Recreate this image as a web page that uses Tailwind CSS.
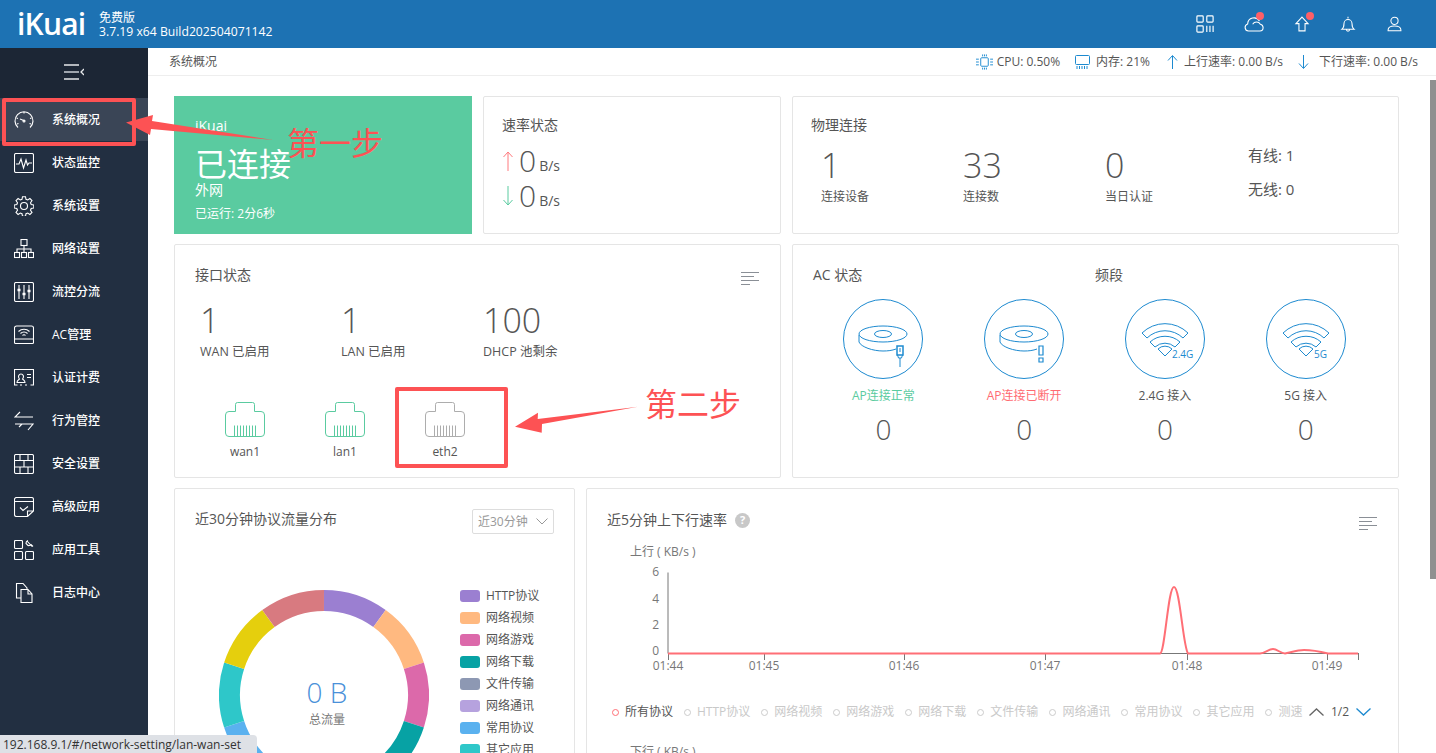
<!DOCTYPE html>
<html lang="zh-CN">
  <head>
    <title>iKuai</title>
    <meta charset="utf-8" />
    <script src="https://cdn.jsdelivr.net/npm/@tailwindcss/browser@4"></script>
  </head>
  <body class="relative h-[753px] w-[1436px] overflow-hidden bg-white font-['Open_Sans','Noto_Sans_CJK_SC',sans-serif] text-[#555]">
    <!-- top bar -->
    <header class="flex h-12 items-center bg-[#1d72b3] text-white">
      <div class="w-[99px] pl-[17px] text-[30px] leading-none font-semibold tracking-[-0.8px]">iKuai</div>
      <div class="pt-[2px] text-xs leading-[14px]">
        <div>免费版</div>
        <div class="text-[12.2px]">3.7.19 x64 Build202504071142</div>
      </div>
      <div class="ml-auto flex items-center gap-[30px] pr-[33px]">
        <svg class="h-[18px] w-[18px]" viewBox="0 0 20 20" fill="none" stroke="#fff" stroke-width="1.3"><rect x="1" y="1" width="7" height="7" rx="1"/><rect x="12" y="1" width="7" height="7" rx="1"/><rect x="1" y="12" width="7" height="7" rx="1"/><path d="M12 12v7M15.500 12v7M19 12v7"/></svg>
        <div class="relative">
          <svg class="block h-4 w-5" viewBox="0 2 22 17.600" fill="none" stroke="#fff" stroke-width="1.200"><path d="M5 18.500a4 4 0 0 1-1-7.800A7 7 0 0 1 17 7.500M9.500 11a5 5 0 0 1 8.500 0a3.800 3.800 0 0 1 3 3.600 3.800 3.800 0 0 1-3.500 3.900H5"/></svg>
          <span class="absolute top-[-4px] right-0 h-2 w-2 rounded-full bg-[#ff5f67]"></span>
        </div>
        <div class="relative">
          <svg class="block h-4 w-4" viewBox="0 0 18 21" fill="none" stroke="#fff" stroke-width="1.400"><path d="M9 1.500 17 10h-4v9.500H5V10H1z"/></svg>
          <span class="absolute top-[-4px] right-[-4px] h-2 w-2 rounded-full bg-[#ff5f67]"></span>
        </div>
        <svg class="h-4 w-4" viewBox="0 0 17 20" fill="none" stroke="#fff" stroke-width="1.300"><path d="M8.500 1v2M1 16.500c2-1.500 2.500-4 2.500-7a5 5 0 0 1 10 0c0 3 .5 5.500 2.500 7zM6.500 17a2 2 0 0 0 4 0"/></svg>
        <svg class="h-4 w-[17px]" viewBox="0 0 18 20" fill="none" stroke="#fff" stroke-width="1.300"><circle cx="9" cy="6" r="4.500"/><path d="M1 18.500v-1c0-3 3-5 8-5s8 2 8 5v1z"/></svg>
      </div>
    </header>

    <div class="flex h-[705px]">
      <!-- side menu -->
      <aside class="w-[148px] shrink-0 bg-[#222f41] text-xs font-medium text-white">
        <div class="flex h-[50px] items-center justify-center bg-[#1c2635]">
          <svg class="mt-[-2px] h-4 w-5" viewBox="0 0 20 16" fill="none" stroke="#e5e7ea" stroke-width="1.300"><path d="M0 1h15M0 15h15M20 5l-3 3 3 3"/><path d="M0 8h15" stroke="#9ea4ad" stroke-width="2"/></svg>
        </div>
        <nav>
          <a class="flex h-[43px] items-center gap-[18px] bg-[#3a4556] pl-[14px]">
            <svg class="h-5 w-5" viewBox="0 0 20 20" fill="none" stroke="#fff" stroke-width="1.100"><path d="M4 17.500A9 9 0 1 1 16 17.500M6 9l5 2M10 2v1.500M2.500 8l1.500.5M17.500 8l-1.500.5M3 14l1.500-.5M17 14l-1.500-.5"/><circle cx="10" cy="11" r="1"/></svg>
            <span>系统概况</span>
          </a>
          <a class="flex h-[43px] items-center gap-[18px] pl-[14px]">
            <svg class="h-5 w-5" viewBox="0 0 20 20" fill="none" stroke="#fff" stroke-width="1.100"><rect x=".5" y=".5" width="19" height="19" rx="1.500"/><path d="M2 11h3l2-5 2.500 9L12 7l1.500 5 1.500-2h3"/></svg>
            <span>状态监控</span>
          </a>
          <a class="flex h-[43px] items-center gap-[18px] pl-[14px]">
            <svg class="h-5 w-5" viewBox="0 0 20 20" fill="none" stroke="#fff" stroke-width="1.100"><circle cx="10" cy="10" r="3.500"/><path d="M8.500 .7h3l.5 2.600 1.700.7 2.200-1.500 2.100 2.100-1.500 2.200.7 1.700 2.600.5v3l-2.600.5-.7 1.700 1.500 2.200-2.100 2.100-2.200-1.500-1.700.7-.5 2.600h-3l-.5-2.600-1.700-.7-2.200 1.500-2.100-2.100 1.500-2.200-.7-1.700-2.600-.5v-3l2.600-.5.7-1.700-1.500-2.200 2.100-2.100 2.200 1.500 1.700-.7z"/></svg>
            <span>系统设置</span>
          </a>
          <a class="flex h-[43px] items-center gap-[18px] pl-[14px]">
            <svg class="h-5 w-5" viewBox="0 0 20 20" fill="none" stroke="#fff" stroke-width="1.100"><rect x="7" y=".5" width="6" height="6"/><rect x=".5" y="13.500" width="5" height="5"/><rect x="7.500" y="13.500" width="5" height="5"/><rect x="14.500" y="13.500" width="5" height="5"/><path d="M10 6.500v7M3 13.500V10h14v3.500"/></svg>
            <span>网络设置</span>
          </a>
          <a class="flex h-[43px] items-center gap-[18px] pl-[14px]">
            <svg class="h-5 w-5" viewBox="0 0 20 20" fill="none" stroke="#fff" stroke-width="1.100"><rect x=".5" y=".5" width="19" height="19" rx="1.500"/><path d="M5 3v14M10 3v14M15 3v14" /><path d="M3.500 8h3M8.500 12h3M13.500 9h3" stroke-width="2.500"/></svg>
            <span>流控分流</span>
          </a>
          <a class="flex h-[43px] items-center gap-[18px] pl-[14px]">
            <svg class="h-5 w-5" viewBox="0 0 20 20" fill="none" stroke="#fff" stroke-width="1.100"><path d="M.5 14V3a2 2 0 0 1 2-2h15a2 2 0 0 1 2 2v11zM.5 14v3.500a1 1 0 0 0 1 1h17a1 1 0 0 0 1-1V14"/><path d="M4.500 6.500a8 8 0 0 1 11 0M6.500 8.500a5 5 0 0 1 7 0M8.500 10.500a2 2 0 0 1 3 0"/></svg>
            <span>AC管理</span>
          </a>
          <a class="flex h-[43px] items-center gap-[18px] pl-[14px]">
            <svg class="h-5 w-5" viewBox="0 0 20 20" fill="none" stroke="#fff" stroke-width="1.100"><path d="M3.500 17H.5V1.500h19V17h-3M6 17h2M11 17h2M3 14.500c0-2.500 1.500-2.500 2.500-3.500-2-2.500-.5-5 1.500-5s3.500 2.500 1.500 5c1 1 2.500 1 2.500 3.500zM13 6.500h4M13 9.500h4"/></svg>
            <span>认证计费</span>
          </a>
          <a class="flex h-[43px] items-center gap-[18px] pl-[14px]">
            <svg class="h-5 w-5" viewBox="0 0 20 20" fill="none" stroke="#fff" stroke-width="1.100"><path d="M19 6H1l5-5M1 13h18l-5 6M8 13l-3 3"/></svg>
            <span>行为管控</span>
          </a>
          <a class="flex h-[43px] items-center gap-[18px] pl-[14px]">
            <svg class="h-5 w-5" viewBox="0 0 20 20" fill="none" stroke="#fff" stroke-width="1.100"><rect x=".5" y=".5" width="19" height="19" rx="1.500"/><path d="M.5 6.500h19M.5 13h19M6 .5v6M14 .5v6M10 6.500V13M6 13v6.500M14 13v6.500"/></svg>
            <span>安全设置</span>
          </a>
          <a class="flex h-[43px] items-center gap-[18px] pl-[14px]">
            <svg class="h-5 w-5" viewBox="0 0 20 20" fill="none" stroke="#fff" stroke-width="1.100"><path d="M13.500 19.500h-11a2 2 0 0 1-2-2V2.500a2 2 0 0 1 2-2h15a2 2 0 0 1 2 2v11.500zM.5 4.500h19M19.500 14h-6v5.500M6 10.500l3 3 5-4"/></svg>
            <span>高级应用</span>
          </a>
          <a class="flex h-[43px] items-center gap-[18px] pl-[14px]">
            <svg class="h-5 w-5" viewBox="0 0 20 20" fill="none" stroke="#fff" stroke-width="1.100"><rect x=".5" y=".5" width="8" height="8" rx="1"/><rect x=".5" y="11.500" width="8" height="8" rx="1"/><rect x="11.500" y="11.500" width="8" height="8" rx="1"/><path d="M13 1l5 5.500M14 .5a3 3 0 0 0-2 3l2 2a3 3 0 0 0 3-1l2 2" /></svg>
            <span>应用工具</span>
          </a>
          <a class="flex h-[43px] items-center gap-[18px] pl-[14px]">
            <svg class="h-5 w-5" viewBox="0 0 20 20" fill="none" stroke="#fff" stroke-width="1.100"><path d="M6.500 15H2.500V.5H9l4 4.500V7M7 6.500h7l4 4.500v8.500H7zM14 6.500V11h4"/></svg>
            <span>日志中心</span>
          </a>
        </nav>
      </aside>

      <main class="flex min-w-0 flex-1 flex-col">
        <!-- breadcrumb and live figures -->
        <div class="flex h-[28px] shrink-0 items-center border-b border-[#eee] pr-[18px] pl-[21px] text-xs">
          <span>系统概况</span>
          <div class="ml-auto flex items-center">
            <svg class="mr-[4px] h-4 w-[17px]" viewBox="0 0 18 16" fill="none" stroke="#1d8ad0" stroke-width="1"><rect x="5" y="3.500" width="8" height="9" rx="1"/><path d="M0 5h3M0 8h3M0 11h3M15 5h3M15 8h3M15 11h3M7 0v2M9 0v2M11 0v2M7 14v2M9 14v2M11 14v2"/></svg>
            <span>CPU: 0.50%</span>
            <svg class="mr-[6px] ml-[15px] h-[14px] w-[15px]" viewBox="0 0 15 14" fill="none" stroke="#1d8ad0" stroke-width="1"><rect x=".5" y=".5" width="14" height="9" rx="1"/><path d="M2 11v3M4.500 11v3M7 11v3M9.500 11v3M12 11v3"/></svg>
            <span>内存: 21%</span>
            <svg class="mr-[6px] ml-[17px] h-[14px] w-[11px]" viewBox="0 0 11 14" fill="none" stroke="#1d8ad0" stroke-width="1"><path d="M5.500 14V1M1 5.500l4.500-5 4.500 5"/></svg>
            <span>上行速率: 0.00 B/s</span>
            <svg class="mr-[10px] ml-[15px] h-[14px] w-[11px]" viewBox="0 0 11 14" fill="none" stroke="#1d8ad0" stroke-width="1"><path d="M5.500 0v13M1 8.500l4.500 5 4.500-5"/></svg>
            <span>下行速率: 0.00 B/s</span>
          </div>
        </div>

        <div class="flex min-h-0 flex-1">
          <div class="flex w-[1275px] shrink-0 flex-col gap-[10px] pt-5 pl-[26px] pr-[24px]">
            <!-- row 1 -->
            <div class="flex h-[138px] shrink-0 gap-[11px]">
              <section class="w-[298px] bg-[#5acba0] pt-[22px] pl-[21px] text-white">
                <div class="text-sm leading-4">iKuai</div>
                <div class="mt-[11px] text-[32px] leading-[38px]">已连接</div>
                <div class="mt-[-3px] text-sm leading-5">外网</div>
                <div class="mt-[5px] text-xs leading-[18px]">已运行: 2分6秒</div>
              </section>
              <section class="w-[298px] rounded-[2px] border border-[#e5e5e5] pt-[18px] pl-[18px]">
                <h2 class="text-sm leading-5">速率状态</h2>
                <div class="mt-[8px] flex h-[35px] items-center">
                  <svg class="mr-[5px] h-5 w-3" viewBox="0 0 12 20" fill="none" stroke="#ff7b7f" stroke-width="1"><path d="M6 20V1M1.500 6 6 1l4.500 5"/></svg>
                  <span class="text-[30px] leading-none font-light">0</span>
                  <span class="mt-[10px] ml-[3px] text-sm leading-4">B/s</span>
                </div>
                <div class="flex h-[35px] items-center">
                  <svg class="mr-[5px] h-5 w-3" viewBox="0 0 12 20" fill="none" stroke="#5acba0" stroke-width="1"><path d="M6 0v19M1.500 14 6 19l4.500-5"/></svg>
                  <span class="text-[30px] leading-none font-light">0</span>
                  <span class="mt-[10px] ml-[3px] text-sm leading-4">B/s</span>
                </div>
              </section>
              <section class="relative w-[607px] rounded-[2px] border border-[#e5e5e5] pt-[18px] pl-[18px]">
                <h2 class="text-sm leading-5">物理连接</h2>
                <div class="mt-[10px] flex pl-[10px]">
                  <div class="w-[142px]"><div class="text-[34px] leading-[40px] font-light">1</div><div class="mt-[2px] text-xs leading-5">连接设备</div></div>
                  <div class="w-[142px]"><div class="text-[34px] leading-[40px] font-light">33</div><div class="mt-[2px] text-xs leading-5">连接数</div></div>
                  <div class="w-[143px]"><div class="text-[34px] leading-[40px] font-light">0</div><div class="mt-[2px] text-xs leading-5">当日认证</div></div>
                  <div class="text-[15px]">
                    <div class="leading-5">有线: 1</div>
                    <div class="mt-[14px] leading-5">无线: 0</div>
                  </div>
                </div>
              </section>
            </div>

            <!-- row 2 -->
            <div class="flex h-[234px] shrink-0 gap-[11px]">
              <section class="w-[607px] rounded-[2px] border border-[#e5e5e5] pt-[19px] pr-[21px] pl-5">
                <div class="flex items-center justify-between">
                  <h2 class="text-sm leading-5">接口状态</h2>
                  <svg class="mt-2 h-[14px] w-[18px]" viewBox="0 0 18 14" stroke="#8a8f96" stroke-width="1"><path d="M0 .5h18M0 4.500h13M0 8.500h18M0 12.500h9"/></svg>
                </div>
                <div class="mt-[12px] flex pl-[5px]">
                  <div class="w-[141px]"><div class="text-[34px] leading-[44px] font-light">1</div><div class="text-[12.5px] leading-5">WAN 已启用</div></div>
                  <div class="w-[142px]"><div class="text-[34px] leading-[44px] font-light">1</div><div class="text-[12.5px] leading-5">LAN 已启用</div></div>
                  <div><div class="text-[34px] leading-[44px] font-light">100</div><div class="text-[12.5px] leading-5">DHCP 池剩余</div></div>
                </div>
                <div class="mt-[40px] flex text-xs">
                  <div class="flex w-[100px] flex-col items-center gap-[7px]">
                    <svg class="h-[35px] w-10" viewBox="0 0 40 35" fill="none" stroke="#5acba0" stroke-width="1"><path d="M10.500 9.500v-7a2 2 0 0 1 2-2h15a2 2 0 0 1 2 2v7H36a3.500 3.500 0 0 1 3.500 3.500v18a3.500 3.500 0 0 1-3.500 3.500H4A3.500 3.500 0 0 1 .500 31V13A3.500 3.500 0 0 1 4 9.500zM9.500 23.500v11M12.500 23.500v11M15.500 23.500v11M18.500 23.500v11M21.500 23.500v11M24.500 23.500v11M27.500 23.500v11M30.500 23.500v11"/></svg>
                    <span>wan1</span>
                  </div>
                  <div class="flex w-[100px] flex-col items-center gap-[7px]">
                    <svg class="h-[35px] w-10" viewBox="0 0 40 35" fill="none" stroke="#5acba0" stroke-width="1"><path d="M10.500 9.500v-7a2 2 0 0 1 2-2h15a2 2 0 0 1 2 2v7H36a3.500 3.500 0 0 1 3.500 3.500v18a3.500 3.500 0 0 1-3.500 3.500H4A3.500 3.500 0 0 1 .500 31V13A3.500 3.500 0 0 1 4 9.500zM9.500 23.500v11M12.500 23.500v11M15.500 23.500v11M18.500 23.500v11M21.500 23.500v11M24.500 23.500v11M27.500 23.500v11M30.500 23.500v11"/></svg>
                    <span>lan1</span>
                  </div>
                  <div class="flex w-[100px] flex-col items-center gap-[7px]">
                    <svg class="h-[35px] w-10" viewBox="0 0 40 35" fill="none" stroke="#adadad" stroke-width="1"><path d="M10.500 9.500v-7a2 2 0 0 1 2-2h15a2 2 0 0 1 2 2v7H36a3.500 3.500 0 0 1 3.500 3.500v18a3.500 3.500 0 0 1-3.500 3.500H4A3.500 3.500 0 0 1 .500 31V13A3.500 3.500 0 0 1 4 9.500zM9.500 23.500v11M12.500 23.500v11M15.500 23.500v11M18.500 23.500v11M21.500 23.500v11M24.500 23.500v11M27.500 23.500v11M30.500 23.500v11"/></svg>
                    <span>eth2</span>
                  </div>
                </div>
              </section>
              <section class="w-[607px] rounded-[2px] border border-[#e5e5e5] pt-5">
                <div class="flex pl-5 text-sm leading-5">
                  <h2 class="w-[282px]">AC 状态</h2>
                  <h2>频段</h2>
                </div>
                <div class="mt-[14px] grid grid-cols-4 pr-[22px] pl-[20px] text-center text-xs">
                  <div class="flex flex-col items-center">
                    <svg class="h-20 w-20" viewBox="0 0 80 80" fill="none" stroke="#1d8ad0" stroke-width="1"><circle cx="40" cy="40" r="39.500"/><ellipse cx="40" cy="35" rx="24" ry="8"/><ellipse cx="40" cy="35" rx="8.500" ry="3.500"/><path d="M16 36v7c2 5 14 9 24 9 5 0 9-.5 13-2"/><rect x="54" y="47" width="6" height="9" fill="#fff" stroke-width="1.500"/><path d="M57 49v4M54.500 56l1 3h3l1-3M57 59v9"/></svg>
                    <div class="mt-[10px] leading-[13px] text-[#5acba0]">AP连接正常</div>
                    <div class="mt-[10px] text-[28px] leading-[34px] font-light">0</div>
                  </div>
                  <div class="flex flex-col items-center">
                    <svg class="h-20 w-20" viewBox="0 0 80 80" fill="none" stroke="#1d8ad0" stroke-width="1"><circle cx="40" cy="40" r="39.500"/><ellipse cx="40" cy="35" rx="24" ry="8"/><ellipse cx="40" cy="35" rx="8.500" ry="3.500"/><path d="M16 36v7c2 5 14 9 24 9 5 0 9-.5 13-2"/><path d="M55 47h4v9h-4zM55 59h4v4h-4z" stroke-width="1.200"/></svg>
                    <div class="mt-[10px] leading-[13px] text-[#ff6b72]">AP连接已断开</div>
                    <div class="mt-[10px] text-[28px] leading-[34px] font-light">0</div>
                  </div>
                  <div class="flex flex-col items-center">
                    <svg class="h-20 w-20" viewBox="0 0 80 80" fill="none" stroke="#1d8ad0" stroke-width="1"><circle cx="40" cy="40" r="39.500"/><path d="M17 34a33 33 0 0 1 46 0l-5 5a26 26 0 0 0-36 0zM25 43a22.500 22.500 0 0 1 30 0l-5 5a15 15 0 0 0-20 0zM33 50a10 10 0 0 1 14 0l-7 7z"/><text x="47" y="59" font-size="10" fill="#1d8ad0" stroke="none">2.4G</text></svg>
                    <div class="mt-[10px] leading-[13px]">2.4G 接入</div>
                    <div class="mt-[10px] text-[28px] leading-[34px] font-light">0</div>
                  </div>
                  <div class="flex flex-col items-center">
                    <svg class="h-20 w-20" viewBox="0 0 80 80" fill="none" stroke="#1d8ad0" stroke-width="1"><circle cx="40" cy="40" r="39.500"/><path d="M17 34a33 33 0 0 1 46 0l-5 5a26 26 0 0 0-36 0zM25 43a22.500 22.500 0 0 1 30 0l-5 5a15 15 0 0 0-20 0zM33 50a10 10 0 0 1 14 0l-7 7z"/><text x="48" y="59" font-size="10" fill="#1d8ad0" stroke="none">5G</text></svg>
                    <div class="mt-[10px] leading-[13px]">5G 接入</div>
                    <div class="mt-[10px] text-[28px] leading-[34px] font-light">0</div>
                  </div>
                </div>
              </section>
            </div>

            <!-- row 3 -->
            <div class="flex h-[400px] shrink-0 gap-[11px]">
              <section class="relative w-[401px] rounded-[2px] border border-[#e5e5e5] pt-[20px] pr-5 pl-5">
                <div class="flex justify-between">
                  <h2 class="text-sm leading-5">近30分钟协议流量分布</h2>
                  <div class="flex h-[25px] w-[82px] items-center justify-between rounded-[2px] border border-[#ddd] px-[5px] text-xs text-[#999]">
                    近30分钟
                    <svg class="h-[7px] w-3" viewBox="0 0 12 7" fill="none" stroke="#999" stroke-width="1"><path d="M.5.500 6 6l5.500-5.500"/></svg>
                  </div>
                </div>
                <div class="mt-[44px] flex">
                  <div class="relative mt-[12px] ml-[24px] h-[210px] w-[210px] shrink-0">
                    <svg class="h-[210px] w-[210px]" viewBox="0 0 210 210" fill="none" stroke-width="21">
                      <circle cx="105" cy="105" r="94.500" pathLength="360" stroke-dasharray="36 324" stroke="#9b7fd1" transform="rotate(-90 105 105)"/>
                      <circle cx="105" cy="105" r="94.500" pathLength="360" stroke-dasharray="36 324" stroke="#ffb980" transform="rotate(-54 105 105)"/>
                      <circle cx="105" cy="105" r="94.500" pathLength="360" stroke-dasharray="36 324" stroke="#dc69aa" transform="rotate(-18 105 105)"/>
                      <circle cx="105" cy="105" r="94.500" pathLength="360" stroke-dasharray="36 324" stroke="#07a2a4" transform="rotate(18 105 105)"/>
                      <circle cx="105" cy="105" r="94.500" pathLength="360" stroke-dasharray="36 324" stroke="#8d98b3" transform="rotate(54 105 105)"/>
                      <circle cx="105" cy="105" r="94.500" pathLength="360" stroke-dasharray="36 324" stroke="#b6a2de" transform="rotate(90 105 105)"/>
                      <circle cx="105" cy="105" r="94.500" pathLength="360" stroke-dasharray="36 324" stroke="#5ab1ef" transform="rotate(126 105 105)"/>
                      <circle cx="105" cy="105" r="94.500" pathLength="360" stroke-dasharray="36 324" stroke="#2ec7c9" transform="rotate(162 105 105)"/>
                      <circle cx="105" cy="105" r="94.500" pathLength="360" stroke-dasharray="36 324" stroke="#e5cf0d" transform="rotate(198 105 105)"/>
                      <circle cx="105" cy="105" r="94.500" pathLength="360" stroke-dasharray="36 324" stroke="#d87a80" transform="rotate(234 105 105)"/>
                    </svg>
                    <div class="absolute inset-x-0 top-[86px] pl-[6px] text-center">
                      <div class="text-[28px] leading-[32px] font-light text-[#4a90d9]">0 B</div>
                      <div class="mt-[3px] text-xs leading-[18px] text-[#777]">总流量</div>
                    </div>
                  </div>
                  <ul class="mt-[8px] ml-[31px] flex flex-col gap-[2px] text-xs">
                    <li class="flex h-5 items-center gap-[6px]"><i class="h-3 w-5 rounded-[3px] bg-[#9b7fd1]"></i>HTTP协议</li>
                    <li class="flex h-5 items-center gap-[6px]"><i class="h-3 w-5 rounded-[3px] bg-[#ffb980]"></i>网络视频</li>
                    <li class="flex h-5 items-center gap-[6px]"><i class="h-3 w-5 rounded-[3px] bg-[#dc69aa]"></i>网络游戏</li>
                    <li class="flex h-5 items-center gap-[6px]"><i class="h-3 w-5 rounded-[3px] bg-[#07a2a4]"></i>网络下载</li>
                    <li class="flex h-5 items-center gap-[6px]"><i class="h-3 w-5 rounded-[3px] bg-[#8d98b3]"></i>文件传输</li>
                    <li class="flex h-5 items-center gap-[6px]"><i class="h-3 w-5 rounded-[3px] bg-[#b6a2de]"></i>网络通讯</li>
                    <li class="flex h-5 items-center gap-[6px]"><i class="h-3 w-5 rounded-[3px] bg-[#5ab1ef]"></i>常用协议</li>
                    <li class="flex h-5 items-center gap-[6px]"><i class="h-3 w-5 rounded-[3px] bg-[#2ec7c9]"></i>其它应用</li>
                  </ul>
                </div>
              </section>
              <section class="w-[813px] rounded-[2px] border border-[#e5e5e5] pt-[20px] pr-[21px] pl-5">
                <div class="flex items-center">
                  <h2 class="text-sm leading-5">近5分钟上下行速率</h2>
                  <span class="ml-2 flex h-[15px] w-[15px] items-center justify-center rounded-full bg-[#c8c8c8] text-[11px] font-bold text-white">?</span>
                  <svg class="mt-2 ml-auto h-[14px] w-[18px]" viewBox="0 0 18 14" stroke="#8a8f96" stroke-width="1"><path d="M0 .5h18M0 4.500h13M0 8.500h18M0 12.500h9"/></svg>
                </div>
                <svg class="mt-[1px] ml-[-20px] block h-[145px] w-[790px] text-xs" viewBox="0 0 790 145" fill="none">
                  <text x="43" y="24" font-size="12" fill="#777">上行 ( KB/s )</text>
                  <g font-size="12" fill="#777" text-anchor="end">
                    <text x="72" y="44">6</text><text x="72" y="71">4</text><text x="72" y="97">2</text><text x="72" y="123">0</text>
                  </g>
                  <path d="M81 40.500v81h691M81.500 121v7M177.500 121v7M317.500 121v7M458.500 121v7M600.500 121v7M740.500 121v7M771.500 121v7" stroke="#777" stroke-width="1"/>
                  <g font-size="12" fill="#777" text-anchor="middle">
                    <text x="81" y="138">01:44</text><text x="177" y="138">01:45</text><text x="317" y="138">01:46</text><text x="458" y="138">01:47</text><text x="600" y="138">01:48</text><text x="740" y="138">01:49</text>
                  </g>
                  <path d="M81 121.500H573C578 121 581 55 587 55S596 115 601 121.500H673C678 121 682 117 686 117S694 121.500 698 121.500C702 121 710 118 717 118S735 120 741 121.500H771" stroke="#ff6f76" stroke-width="2"/>
                </svg>
                <div class="mt-[27px] flex items-center pl-[5px] text-xs text-[#c9c9c9]">
                  <span class="flex items-center gap-[6px] text-[#555]"><i class="h-[7px] w-[7px] rounded-full border border-[#ff6f76]"></i>所有协议</span>
                  <span class="ml-[11px] flex items-center gap-[6px]"><i class="h-[7px] w-[7px] rounded-full border border-[#ccc]"></i>HTTP协议</span>
                  <span class="ml-[11px] flex items-center gap-[6px]"><i class="h-[7px] w-[7px] rounded-full border border-[#ccc]"></i>网络视频</span>
                  <span class="ml-[11px] flex items-center gap-[6px]"><i class="h-[7px] w-[7px] rounded-full border border-[#ccc]"></i>网络游戏</span>
                  <span class="ml-[11px] flex items-center gap-[6px]"><i class="h-[7px] w-[7px] rounded-full border border-[#ccc]"></i>网络下载</span>
                  <span class="ml-[11px] flex items-center gap-[6px]"><i class="h-[7px] w-[7px] rounded-full border border-[#ccc]"></i>文件传输</span>
                  <span class="ml-[11px] flex items-center gap-[6px]"><i class="h-[7px] w-[7px] rounded-full border border-[#ccc]"></i>网络通讯</span>
                  <span class="ml-[11px] flex items-center gap-[6px]"><i class="h-[7px] w-[7px] rounded-full border border-[#ccc]"></i>常用协议</span>
                  <span class="ml-[11px] flex items-center gap-[6px]"><i class="h-[7px] w-[7px] rounded-full border border-[#ccc]"></i>其它应用</span>
                  <span class="ml-[11px] flex items-center gap-[6px]"><i class="h-[7px] w-[7px] rounded-full border border-[#ccc]"></i>测速</span>
                  <span class="ml-auto flex items-center gap-[7px] pr-[6px] text-[#555]">
                    <svg class="h-2 w-[15px]" viewBox="0 0 15 8" fill="none" stroke="#666" stroke-width="1.300"><path d="M.5 7.500 7.500 1l7 6.500"/></svg>
                    1/2
                    <svg class="h-2 w-[15px]" viewBox="0 0 15 8" fill="none" stroke="#1d8ad0" stroke-width="1.300"><path d="M.5.500 7.500 7l7-6.500"/></svg>
                  </span>
                </div>
                <div class="mt-[24px] pl-[23px] text-xs text-[#777]">下行 ( KB/s )</div>
              </section>
            </div>
          </div>
          <!-- page scrollbar -->
          <div class="ml-auto w-[6px] pt-1">
            <div class="h-[499px] w-[6px] bg-[#909090]"></div>
          </div>
        </div>
      </main>
    </div>

    <!-- hover link status -->
    <div class="absolute bottom-0 left-0 h-[18px] w-[257px] rounded-tr-[4px] bg-[#dee1e6] pl-[3px] text-xs leading-[19px] whitespace-nowrap text-[#333]">192.168.9.1/#/network-setting/lan-wan-set</div>

    <!-- tutorial annotations -->
    <div class="absolute top-[98px] left-[2px] h-[48px] w-[134px] rounded-[2px] border-[4px] border-[#fd5254]"></div>
    <div class="absolute top-[387px] left-[395px] h-[81px] w-[113px] rounded-[2px] border-[4px] border-[#fd5254]"></div>
    <svg class="absolute top-0 left-0 h-[753px] w-[1436px]" viewBox="0 0 1436 753" fill="#fd5254">
      <path d="M126 122.500 153 115 152 121 273 140 151 129 150 135z"/>
      <path d="M515 426.700 538 412.700 537.700 419 638 406.700 542 424 541.700 432.700z"/>
      <text x="287" y="155" font-size="32">第一步</text>
      <text x="645" y="416" font-size="32">第二步</text>
    </svg>
  </body>
</html>
